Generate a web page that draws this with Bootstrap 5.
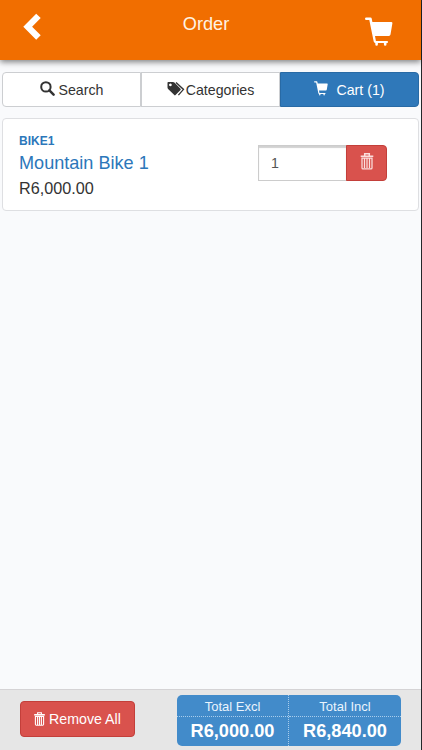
<!DOCTYPE html>
<html lang="en">
<head>
<meta charset="utf-8">
<meta name="viewport" content="width=device-width, initial-scale=1">
<title>Order</title>
<link href="https://cdn.jsdelivr.net/npm/bootstrap@5.3.0/dist/css/bootstrap.min.css" rel="stylesheet">
<style>
body{font-family:"Liberation Sans",Arial,sans-serif;font-size:14.2px;line-height:20px;color:#333;background:#f9fafc;overflow:hidden}
.app{height:100vh;border-right:1px solid #25272b}
svg{display:block;flex:none}
.topbar{height:60px;background:#f16e00;box-shadow:0 2px 6px rgba(0,0,0,.5);padding:0 28px 0 23px}
.topbar h1{font-size:18.2px;line-height:20px;padding-top:14px;margin-left:6px;color:#fff3e4;font-weight:400}
.topbar .back{margin-top:13px}
.topbar .basket{margin-top:17px}
.tabs{margin:12px 2px 0;height:35px}
.tabs .btn{--bs-btn-padding-x:0;--bs-btn-padding-y:0;--bs-btn-font-size:14.2px;--bs-btn-line-height:20px;--bs-btn-border-radius:4px;--bs-btn-color:#333;--bs-btn-bg:#fff;--bs-btn-border-color:#ccced1;--bs-btn-active-bg:#2f78b9;--bs-btn-active-border-color:#286aa5;--bs-btn-active-color:#fff;flex:1 1 0}
.tabs.btn-group>.btn:not(:first-child){margin-left:0}
.tabs svg{margin-bottom:2px}
.item-card{--bs-card-border-color:#dedfe2;--bs-card-border-radius:4px;margin:11px 2px 0;height:93px;padding:0 31px 0 16px}
.lines{padding-top:14px}
.code{font-size:12px;line-height:17px;color:#2c77ba}
.name{font-size:18.1px;line-height:25px;color:#2c77ba;margin-top:1px}
.price{font-size:16.2px;line-height:22px;margin-top:1px}
.qty{width:129px;height:36px;margin-top:26px}
.qty .form-control{font-size:14.2px;padding:2px 13px 0 12px;border:1px solid #ccc;border-radius:0;color:#555;box-shadow:inset 0 2px 1px rgba(0,0,0,.18)}
.btn-del{--bs-btn-bg:#d9524d;--bs-btn-color:#fff;--bs-btn-border-color:#c33f3a;--bs-btn-hover-bg:#c9302c;--bs-btn-hover-color:#fff;--bs-btn-padding-x:0;--bs-btn-padding-y:0;--bs-btn-border-radius:4px;--bs-btn-font-size:14.2px;--bs-btn-line-height:20px}
.qty .btn-del{width:41px;color:#fbdedd;padding-bottom:3px}
.bottombar{height:61px;background:#e6e6e6;border-top:1px solid #d5d3d5;padding:0 20px}
.remove{width:115px;height:36px;margin-top:11px;gap:4px}
.totals{width:224px;height:51px;margin-top:5px;background:#428bca;border-radius:5px;color:#fff}
.totals .sum+.sum{border-left:1px dotted #a9cdec}
.totals .sum:first-child{width:111px}
.totals .sum:last-child{width:113px}
.totals .cap{height:22px;font-size:13px;line-height:24px;border-bottom:1px dotted #a9cdec;color:#eaf4fd}
.totals .amt{font-size:18.2px;line-height:29px}
</style>
</head>
<body>
<svg width="0" height="0" class="position-absolute" aria-hidden="true">
<symbol id="cart" viewBox="0 0 28 30"><path d="M1.3.5h4.2q1 0 1.2 1L7.4 5H26.2q1.4 0 1.2 1.3l-1.9 11.2q-.2 1.4-1.6 1.4H10l.9 5.1H22q1.1 0 1.1 1t-1.1 1.1h-.5v1.2q0 1.5-1.3 1.5t-1.3-1.5v-1.2h-6v1.2q0 1.5-1.3 1.5t-1.3-1.5v-1.3q-1.4-.2-1.6-1.6L4.3 2.9h-3Q0 2.9 0 1.7T1.3.5z" fill="currentColor"/></symbol>
<symbol id="bin" viewBox="0 0 14 17"><path d="M4.7 2.7V.8h4.6v1.9M.7 3.3h12.6" fill="none" stroke="currentColor" stroke-width="1.5"/><path d="M2 5.2v9.7q0 1 1 1h8q1 0 1-1V5.2zM4.5 5v10M7 5v10M9.5 5v10" fill="none" stroke="currentColor" stroke-width="1.25"/></symbol>
</svg>
<div class="app d-flex flex-column">
  <header class="topbar d-flex justify-content-between align-items-start flex-shrink-0">
    <svg class="back" width="18" height="28" viewBox="0 0 18 28"><path d="M13.2.7 17.7 5 9.1 13.7l8.6 8.5-4.5 4.5L.3 13.7z" fill="#fff"/></svg>
    <h1 class="mb-0">Order</h1>
    <svg class="basket text-white" width="28" height="30"><use href="#cart"/></svg>
  </header>
  <nav class="tabs btn-group flex-shrink-0">
    <button class="btn d-flex align-items-center justify-content-center gap-1"><svg width="15" height="15" viewBox="0 0 15 15"><circle cx="5.9" cy="5.9" r="4.7" fill="none" stroke="currentColor" stroke-width="2"/><path d="m9.4 9.4 4.2 4.2" stroke="currentColor" stroke-width="2.5" stroke-linecap="round"/></svg>Search</button>
    <button class="btn d-flex align-items-center justify-content-center"><svg width="19" height="16" viewBox="0 0 19 16"><path fill="currentColor" fill-rule="evenodd" d="M.5 1.8Q.5 1 1.3 1H6q.8 0 1.4.6l6.1 6.2q.6.6 0 1.2l-5 5.1q-.6.6-1.2 0L1.1 8Q.5 7.4.5 6.6zM3.4 2.5a1.4 1.4 0 1 0 .01 0z"/><path d="m9 1.4 7.5 7-5.1 5.7" fill="none" stroke="currentColor" stroke-width="1.3"/></svg>Categories</button>
    <button class="btn active d-flex align-items-center justify-content-center"><svg width="14" height="15" class="me-2"><use href="#cart"/></svg>Cart (1)</button>
  </nav>
  <section class="item-card card flex-row justify-content-between flex-shrink-0">
    <div class="lines d-flex flex-column">
      <div class="code fw-bold">BIKE1</div>
      <div class="name">Mountain Bike 1</div>
      <div class="price">R6,000.00</div>
    </div>
    <div class="qty input-group flex-nowrap">
      <input class="form-control" value="1" aria-label="Quantity">
      <button class="btn btn-del d-flex align-items-center justify-content-center" aria-label="Remove item"><svg width="14" height="17"><use href="#bin"/></svg></button>
    </div>
  </section>
  <footer class="bottombar mt-auto d-flex justify-content-between align-items-start flex-shrink-0">
    <button class="btn btn-del remove d-flex align-items-center justify-content-center"><svg width="11" height="14" viewBox="0 0 11 14"><path d="M3.6 2.3V.7h3.8v1.6M1.4 4.5v7.8q0 .9.9.9h6.4q.9 0 .9-.9V4.5zM3.6 4v9M5.5 4v9M7.4 4v9" fill="none" stroke="currentColor" stroke-width="1.1"/><path d="M.2 2.8h10.6" stroke="currentColor" stroke-width="1.6"/></svg>Remove All</button>
    <div class="totals d-flex text-center">
      <div class="sum"><div class="cap">Total Excl</div><div class="amt fw-bold">R6,000.00</div></div>
      <div class="sum"><div class="cap">Total Incl</div><div class="amt fw-bold">R6,840.00</div></div>
    </div>
  </footer>
</div>
<script src="https://cdn.jsdelivr.net/npm/bootstrap@5.3.0/dist/js/bootstrap.bundle.min.js"></script>
</body>
</html>
